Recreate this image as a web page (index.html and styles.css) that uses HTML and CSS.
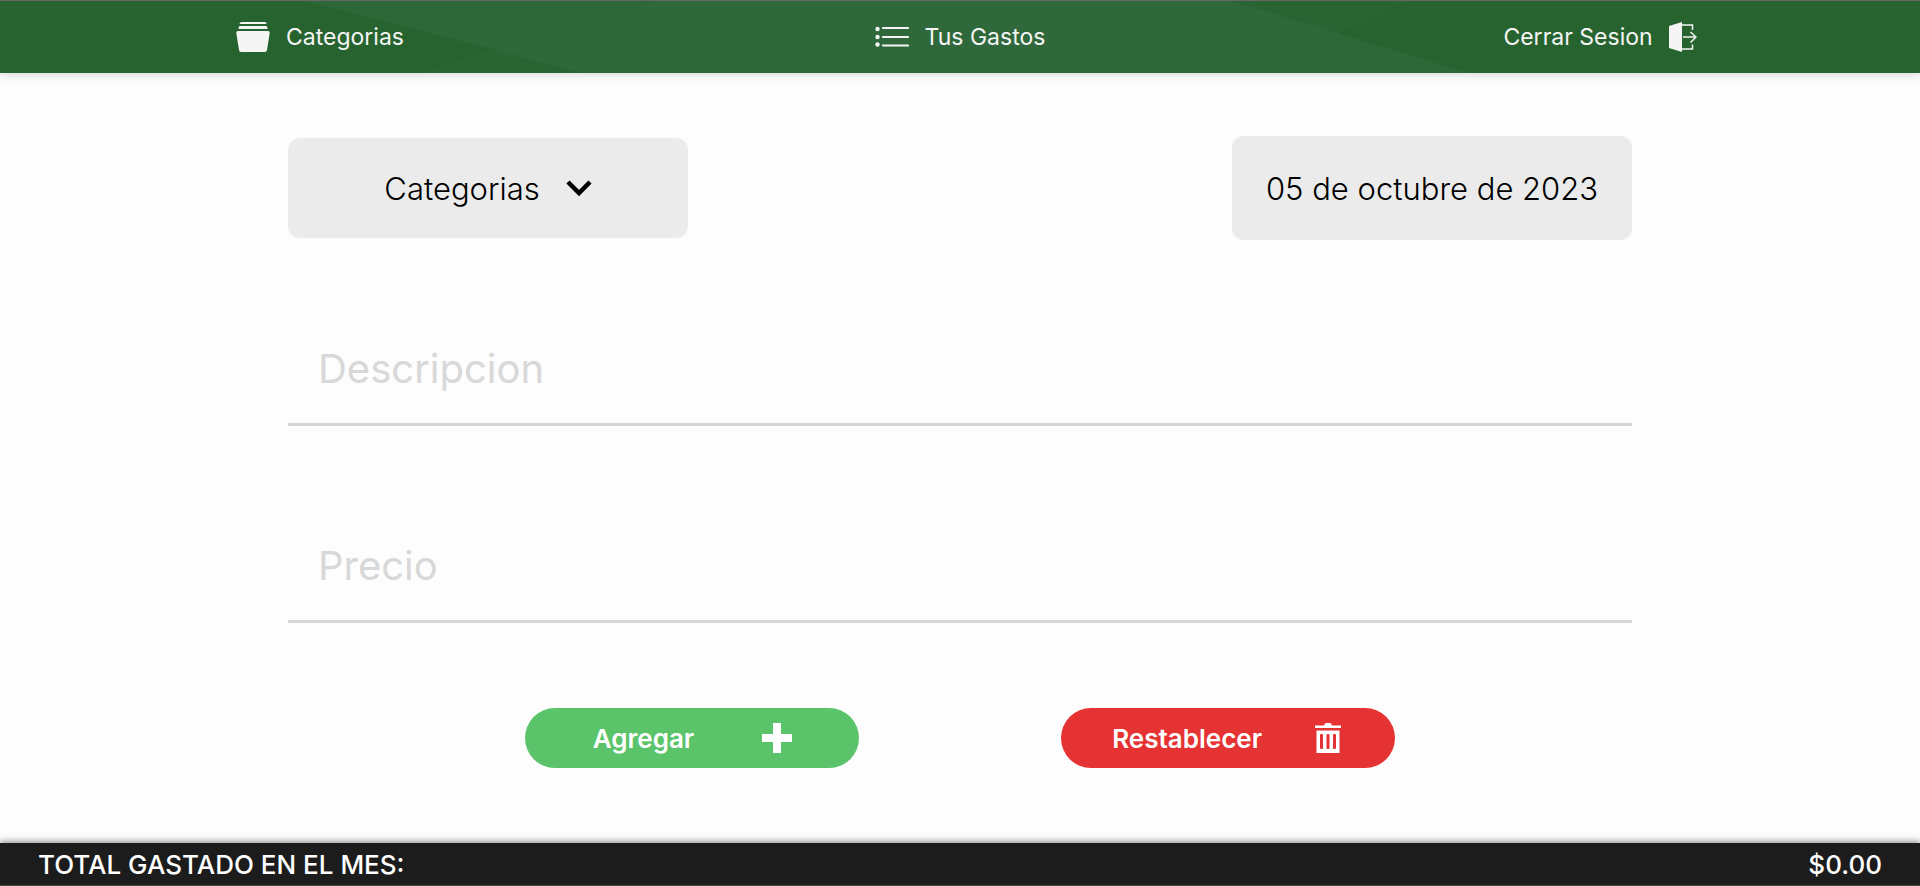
FILE: index.html
```html
<!DOCTYPE html>
<html lang="es">
<head>
<meta charset="utf-8">
<meta name="viewport" content="width=device-width, initial-scale=1">
<title>Gastos</title>
<link rel="stylesheet" href="styles.css">
</head>
<body>
<header class="header">
  <svg class="header-pattern" viewBox="0 0 1920 72" preserveAspectRatio="none" aria-hidden="true">
    <path d="M306 0H1231L1469 72H585Z" fill="#2e6838"/>
    <path d="M658 0H1408L1258 72H416Z" fill="#3a7048" fill-opacity=".16"/>
  </svg>
  <nav class="nav">
    <a class="nav-link" href="#categorias">
      <svg class="nav-icon" width="34" height="32" viewBox="0 0 34 32" fill="currentColor" aria-hidden="true">
        <path d="M6 1h23q1.500 0 1.500 2h-27q0-2 2.500-2ZM4 5h26q1.500 0 1.500 3h-29q0-3 1.500-3ZM2 10h30q2 0 1.700 2L31 29q-.3 2-2 2H5q-1.700 0-2-2L.3 12Q0 10 2 10Z"/>
      </svg>
      <span>Categorias</span>
    </a>
    <a class="nav-link" href="#gastos">
      <svg class="nav-icon" width="34" height="32" viewBox="0 0 34 32" aria-hidden="true">
        <path d="M8 7h25M8 16h25M8 24.500h25" stroke="currentColor" stroke-width="2.200" stroke-linecap="round"/>
        <g fill="currentColor"><circle cx="2.500" cy="8" r="2.200"/><circle cx="2.500" cy="16" r="2.200"/><circle cx="2.500" cy="23.500" r="2.200"/></g>
      </svg>
      <span>Tus Gastos</span>
    </a>
    <a class="nav-link" href="#salir">
      <span>Cerrar Sesion</span>
      <svg class="nav-icon" width="28" height="32" viewBox="0 0 28 32" fill="none" stroke="currentColor" aria-hidden="true">
        <path d="M0 5 13 1v30L0 27Z" fill="currentColor" stroke="none"/>
        <path d="M13 4h10.500v5M13 28h10.500v-4.500M14 16h12.500" stroke-width="1.500"/>
        <path d="m21.500 11 5.500 5-5.500 5.500" stroke-width="1.500"/>
      </svg>
    </a>
  </nav>
</header>

<main class="main">
  <form class="form">
    <div class="top-row">
      <button class="panel category" type="button" aria-haspopup="listbox">
        <span>Categorias</span>
        <svg width="26" height="18" viewBox="0 0 26 18" fill="none" stroke="currentColor" stroke-width="4.500" aria-hidden="true">
          <path d="m2 3 11 11L24 3"/>
        </svg>
      </button>
      <time class="panel date" datetime="2023-10-05">05 de octubre de 2023</time>
    </div>
    <input class="field" type="text" name="descripcion" placeholder="Descripcion" aria-label="Descripcion">
    <input class="field" type="text" name="precio" placeholder="Precio" aria-label="Precio">
    <div class="actions">
      <button class="action add" type="submit">
        <span>Agregar</span>
        <svg width="30" height="30" viewBox="0 0 30 30" fill="currentColor" aria-hidden="true">
          <path d="M11 0h8v11h11v8H19v11h-8V19H0v-8h11Z"/>
        </svg>
      </button>
      <button class="action reset" type="reset">
        <span>Restablecer</span>
        <svg width="30" height="30" viewBox="0 0 30 30" fill="currentColor" aria-hidden="true">
          <path fill-rule="evenodd" d="M2 2.500h9Q11.500 0 13 0h4q1.500 0 2 2.500h9V5H2ZM3.500 7.500h23V30h-23ZM8 11q-1 0-1 1v13q0 1 1 1h1q1 0 1-1V12q0-1-1-1ZM14.500 11q-1 0-1 1v13q0 1 1 1h1q1 0 1-1V12q0-1-1-1ZM21 11q-1 0-1 1v13q0 1 1 1h1q1 0 1-1V12q0-1-1-1Z"/>
        </svg>
      </button>
    </div>
  </form>
</main>

<footer class="footer">
  <span>TOTAL GASTADO EN EL MES:</span>
  <span>$0.00</span>
</footer>
</body>
</html>
```

FILE: styles.css
```css
* {
  box-sizing: border-box;
}

body {
  display: flex;
  flex-direction: column;
  min-height: 100vh;
  margin: 0;
  background: #fdfdfd;
  color: #000;
  font-family: Inter, "Liberation Sans", sans-serif;
}

button,
input {
  font: inherit;
}

button {
  border: 0;
  cursor: pointer;
}

.header {
  position: relative;
  border-top: 1px solid #666;
  background: #27632f;
  box-shadow: 0 2px 8px rgba(0, 0, 0, 0.15);
}

.header-pattern {
  position: absolute;
  inset: 0;
  width: 100%;
  height: 100%;
}

.nav {
  position: relative;
  display: grid;
  grid-template-columns: repeat(3, 1fr);
}

.nav-link {
  display: flex;
  align-items: center;
  justify-content: center;
  gap: 16px;
  height: 72px;
  color: #f5f5f5;
  font-size: 23px;
  text-decoration: none;
}

.main {
  flex: 1;
  width: 70%;
  margin: 0 auto;
  padding: 63px 0 72px;
}

.form {
  display: flex;
  flex-direction: column;
}

.top-row {
  display: flex;
  align-items: center;
  justify-content: space-between;
}

.panel {
  display: flex;
  align-items: center;
  justify-content: center;
  gap: 26px;
  width: 400px;
  border-radius: 12px;
  background: #ebebeb;
  color: #000;
  font-size: 31px;
  font-weight: 300;
}

.category {
  height: 100px;
}

.date {
  height: 104px;
}

.field {
  width: 100%;
  height: 112px;
  padding: 0 30px;
  margin-top: 74px;
  border: 0;
  border-bottom: 3px solid #d6d6d6;
  background: transparent;
  font-size: 40px;
  outline: none;
}

.field + .field {
  margin-top: 85px;
}

.field::placeholder {
  color: #d8d8d8;
  opacity: 1;
}

.actions {
  display: flex;
  justify-content: center;
  gap: 15%;
  margin-top: 85px;
}

.action {
  display: flex;
  align-items: center;
  justify-content: space-evenly;
  width: 334px;
  height: 60px;
  padding: 0;
  border-radius: 30px;
  color: #fff;
  font-size: 26px;
  font-weight: 600;
}

.add {
  background: #5bc46b;
}

.reset {
  background: #e53333;
}

.footer {
  display: flex;
  align-items: center;
  justify-content: space-between;
  height: 43px;
  padding: 0 38px;
  border-bottom: 1px solid #444;
  background: #1c1c1c;
  box-shadow: 0 -2px 6px rgba(0, 0, 0, 0.4);
  color: #fff;
  font-size: 26px;
  font-weight: 500;
}
```
